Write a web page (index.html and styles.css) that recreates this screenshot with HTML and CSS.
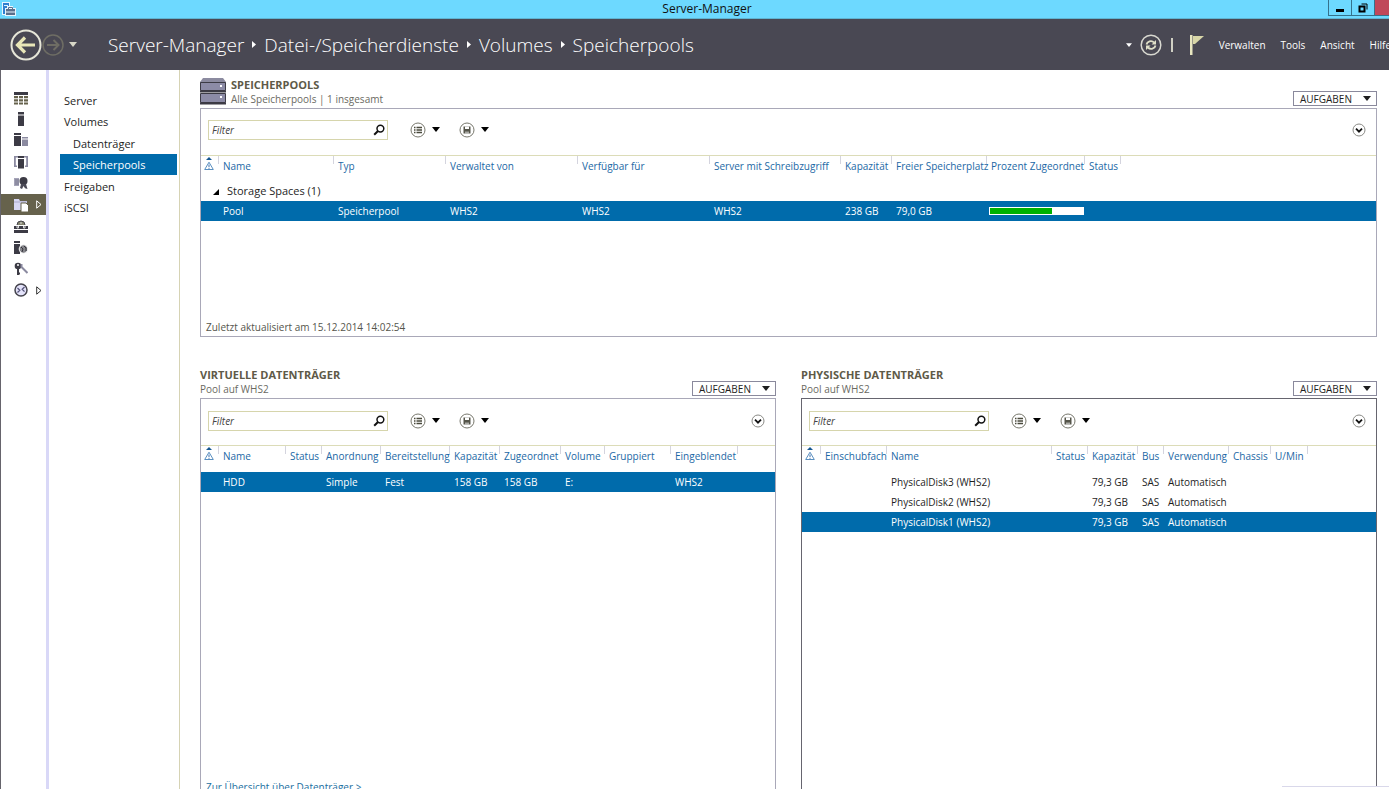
FILE: index.html
```
<!DOCTYPE html>
<html lang="de">

<head>
  <meta charset="utf-8">
  <title>Server-Manager</title>
  <link rel="stylesheet" href="styles.css">
</head>

<body>
  <!-- shared icons -->
  <svg class="defs" aria-hidden="true">
    <symbol id="caret" viewBox="0 0 8 5"><path d="M0 0h8L4 5z" fill="currentColor"/></symbol>
    <symbol id="right" viewBox="0 0 4 7"><path d="M0 0l4 3.5L0 7z" fill="currentColor"/></symbol>
    <symbol id="search" viewBox="0 0 12 12">
      <circle cx="7.4" cy="4.6" r="3.4" fill="none" stroke="#111" stroke-width="1.5"/>
      <path d="M5 7L1.2 10.8" stroke="#111" stroke-width="2"/>
    </symbol>
    <symbol id="list" viewBox="0 0 16 16">
      <circle cx="8" cy="8" r="7" fill="#fff" stroke="#77776c"/>
      <path d="M4 5.5h1.5M4 8h1.5M4 10.5h1.5M6.5 5.5H12M6.5 8H12M6.5 10.5H12" stroke="#4a4a3c" stroke-width="1.3"/>
    </symbol>
    <symbol id="save" viewBox="0 0 16 16">
      <circle cx="8" cy="8" r="7" fill="#fff" stroke="#77776c"/>
      <path d="M4.5 4.5h7v7h-7z" fill="#55554a"/>
      <path d="M6 4.500h4v2.500H6zM6.500 9.500h1v2h-1zM8.500 9.500h1v2h-1z" fill="#fff"/>
    </symbol>
    <symbol id="expand" viewBox="0 0 14 14">
      <circle cx="7" cy="7" r="6" fill="#fff" stroke="#8a8a86"/>
      <path d="M4 5.700l3 3 3-3" fill="none" stroke="#111" stroke-width="1.8"/>
    </symbol>
    <symbol id="warn" viewBox="0 0 10 14">
      <path d="M2 3l3-3 3 3z" fill="#15568f"/>
      <path d="M5 5.200L9.300 12.500H.7z" fill="#fff" stroke="#5a8fc0"/>
      <path d="M5 7.500v2.500M5 10.800v1" stroke="#3a6fb0"/>
    </symbol>
  </svg>

  <div class="window">
    <div class="titlebar">
      <svg class="app-icon" viewBox="0 0 14 14">
        <path d="M0 0h8v13H0z" fill="#e8f6ff"/>
        <path d="M1 1h6v11H1z" fill="#2f7fd0"/>
        <path d="M2 3.500h4" stroke="#d8f2ff"/>
        <path d="M3 6h2V4h6v2h3v8H3z" fill="#e8f6ff"/>
        <path d="M4 7h9v2.500H4zM4 10.500h9V13H4z" fill="#5b6f8c"/>
        <path d="M6.500 7V5.500h4V7" fill="none" stroke="#5b6f8c"/>
      </svg>
      <span class="window-title">Server-Manager</span>
      <div class="window-buttons">
        <button class="win-btn" aria-label="Minimieren"><svg width="10" height="10"><path d="M1 6h8v3H1z"/></svg></button>
        <button class="win-btn" aria-label="Verkleinern"><svg width="10" height="10" fill="none" stroke="#000"><path d="M1.500 3.500h5v5h-5z" stroke-width="2"/><path d="M3.500 1h5.500v5.500"/></svg></button>
        <button class="win-btn close" aria-label="Schließen"></button>
      </div>
    </div>

    <header class="header">
      <button class="icon-btn" aria-label="Zurück">
        <svg width="32" height="32" fill="none"><circle cx="16" cy="16" r="14.500" stroke="#e6e6d8" stroke-width="2"/><path d="M7 16h18M15 8.500L7.500 16l7.500 7.500" stroke="#e8e6b8" stroke-width="3.200"/></svg>
      </button>
      <button class="icon-btn" aria-label="Vorwärts">
        <svg width="22" height="22" fill="none" stroke="#6e6d64"><circle cx="11" cy="11" r="10" stroke-width="1.500"/><path d="M5 11h11M11.500 6l5 5-5 5" stroke-width="2"/></svg>
      </button>
      <button class="icon-btn history" aria-label="Verlauf"><svg width="8" height="5"><use href="#caret"/></svg></button>

      <nav class="breadcrumb">
        <a href="#">Server-Manager</a>
        <svg width="4" height="7"><use href="#right"/></svg>
        <a href="#">Datei-/Speicherdienste</a>
        <svg width="4" height="7"><use href="#right"/></svg>
        <a href="#">Volumes</a>
        <svg width="4" height="7"><use href="#right"/></svg>
        <a href="#">Speicherpools</a>
      </nav>

      <div class="header-tools">
        <button class="icon-btn" aria-label="Optionen"><svg width="6" height="4"><use href="#caret"/></svg></button>
        <button class="icon-btn refresh" aria-label="Aktualisieren">
          <svg width="22" height="22" fill="none"><circle cx="11" cy="11" r="9.800" stroke="#d8d8d0" stroke-width="1.500"/><path d="M6.500 10.500C7 7.500 11.500 6 14 8.500M15.500 11.500C15 14.500 10.500 16 8 13.500" stroke="#e0e0c8" stroke-width="1.800"/><path d="M16 6v4.500h-4.500zM6 16v-4.500h4.500z" fill="#e0e0c8"/></svg>
        </button>
        <span class="divider"></span>
        <button class="icon-btn flag" aria-label="Benachrichtigungen">
          <svg width="14" height="20"><path d="M0 0h2.500v20H0z" fill="#e8e6c0"/><path d="M3 1h11L5 9H3z" fill="#d8d6a8"/></svg>
        </button>
        <button class="menu">Verwalten</button>
        <button class="menu">Tools</button>
        <button class="menu">Ansicht</button>
        <button class="menu">Hilfe</button>
      </div>
    </header>

    <div class="body">
      <nav class="rail">
        <a href="#" aria-label="Dashboard"><svg viewBox="0 0 14 14"><path d="M0 1h14v3H0z" fill="#3c3b45"/><path d="M0 5h4v2.300H0zM5 5h4v2.300H5zM10 5h4v2.300h-4zM0 8.200h4v2.300H0zM5 8.200h4v2.300H5zM10 8.200h4v2.300h-4zM0 11.400h4V13.500H0zM5 11.400h4V13.500H5zM10 11.400h4V13.500h-4z" fill="#66624c"/></svg></a>
        <a href="#" aria-label="Lokaler Server"><svg viewBox="0 0 14 14"><path d="M4 0h6v2.500H4zM4 3.500h6V14H4z" fill="#3c3b45"/></svg></a>
        <a href="#" aria-label="Alle Server"><svg viewBox="0 0 14 14"><path d="M0 0h7v2H0zM0 3h7v10H0z" fill="#3c3b45"/><path d="M8 4h6v1.500H8zM8 6.500h6V13H8z" fill="#8b8aa0"/></svg></a>
        <a href="#" aria-label="Servergruppe"><svg viewBox="0 0 14 14"><path d="M1 1h3v1.500H1.800v8H3V12H0V1zM10 1h4v11h-3v-1.500h1.200v-8H10z" fill="#8b8aa0"/><path d="M4 1h6v2H4zM4 4h6v9.500H4z" fill="#3c3b45"/></svg></a>
        <a href="#" aria-label="Zertifikatdienste"><svg viewBox="0 0 14 14"><path d="M0 2h5v8H0z" fill="#a5a4b8"/><path d="M1 4h4M1 6h4M1 8h4" stroke="#77768c"/><circle cx="9.500" cy="5" r="4" fill="#3c3b45"/><path d="M7 8h5l1.500 5-2.500-.8L9.500 10 8 13l-2-1z" fill="#4a4955"/></svg></a>
        <a href="#" class="active" aria-label="Datei-/Speicherdienste"><svg viewBox="0 0 14 14"><path d="M0 1h5l1 2h7v9H0z" fill="#d6d6f2"/><path d="M0 4h13" stroke="#aaa9c8"/><path d="M7 5h5l2.500 2.500V14H7z" fill="#fff" stroke="#66624c"/></svg><svg class="more" viewBox="0 0 6 9"><path d="M.7.8l4.300 3.700L.7 8.200z" fill="none" stroke="#fff"/></svg></a>
        <a href="#" aria-label="Hyper-V"><svg viewBox="0 0 14 14"><path d="M3 6a4 4 0 0 1 8 0" fill="#85856f" stroke="#44434c"/><path d="M0 7h14v3H0zM0 11h14v3H0z" fill="#3c3b45"/><path d="M3 7v2h1.500V7M9.500 7v2H11V7M6 4h2" stroke="#ddd" fill="none"/></svg></a>
        <a href="#" aria-label="IIS"><svg viewBox="0 0 14 14"><path d="M0 0h6v2H0zM0 3h6v10H0z" fill="#3c3b45"/><circle cx="9.500" cy="8" r="4.300" fill="#85858a" stroke="#fff"/><path d="M7 6l2 2-1 3M10 5l2 2v3" stroke="#35343c" fill="none"/></svg></a>
        <a href="#" aria-label="Zugriff"><svg viewBox="0 0 14 14"><circle cx="4" cy="4" r="3.300" fill="#3c3b45"/><path d="M4 6v7M4 11.500h2" stroke="#3c3b45" stroke-width="2"/><path d="M7.500 2v3l6 6" stroke="#8b8aa0" stroke-width="2" fill="none"/><circle cx="4" cy="3" r="1" fill="#fff"/></svg></a>
        <a href="#" aria-label="Remotedesktop"><svg viewBox="0 0 14 14"><circle cx="7" cy="7" r="6" fill="#e4e3fa" stroke="#44434c" stroke-width="1.500"/><path d="M3.500 5l2.300 2.300L3.500 9.500M10.500 4L8.200 6.300l2.300 2.300" stroke="#55547a" stroke-width="1.300" fill="none"/></svg><svg class="more" viewBox="0 0 6 9"><path d="M.7.8l4.300 3.700L.7 8.200z" fill="none" stroke="#333"/></svg></a>
      </nav>

      <nav class="sidenav">
        <ul>
          <li><a href="#">Server</a></li>
          <li><a href="#">Volumes</a></li>
          <li class="sub"><a href="#">Datenträger</a></li>
          <li class="sub selected"><a href="#">Speicherpools</a></li>
          <li><a href="#">Freigaben</a></li>
          <li><a href="#">iSCSI</a></li>
        </ul>
      </nav>

      <main class="content">
        <section class="tile pools">
          <div class="tile-head">
            <svg class="pool-icon" width="26" height="28" viewBox="0 0 26 28">
              <path d="M3 1h20l3 4v8H0V5z" fill="#8c8ba0"/>
              <path d="M.5 5.500h25v8H.5zM.5 16.500h25v9H.5z" fill="#8c8ba6" stroke="#3c3b45"/>
              <path d="M0 14.500h26M0 26.500h26" stroke="#3c3b45" stroke-width="2"/>
              <path d="M20 8h2v2h-2zM20 19h2v2h-2z" fill="#fff"/>
            </svg>
            <div class="tile-title">
              <h2>SPEICHERPOOLS</h2>
              <p>Alle Speicherpools | 1 insgesamt</p>
            </div>
            <button class="tasks">AUFGABEN <svg width="8" height="5"><use href="#caret"/></svg></button>
          </div>
          <div class="panel">
            <div class="toolbar">
              <div class="filter">
                <input type="text" placeholder="Filter" aria-label="Speicherpools filtern">
                <svg width="12" height="12"><use href="#search"/></svg>
              </div>
              <button class="tool" aria-label="Ansicht"><svg width="16" height="16"><use href="#list"/></svg><svg width="8" height="5"><use href="#caret"/></svg></button>
              <button class="tool" aria-label="Speichern"><svg width="16" height="16"><use href="#save"/></svg><svg width="8" height="5"><use href="#caret"/></svg></button>
              <button class="tool expand" aria-label="Erweitern"><svg width="14" height="14"><use href="#expand"/></svg></button>
            </div>
            <table class="pool-table">
              <thead>
                <tr>
                  <th><svg width="10" height="14"><use href="#warn"/></svg></th>
                  <th>Name</th>
                  <th>Typ</th>
                  <th>Verwaltet von</th>
                  <th>Verfügbar für</th>
                  <th>Server mit Schreibzugriff</th>
                  <th>Kapazität</th>
                  <th>Freier Speicherplatz</th>
                  <th>Prozent Zugeordnet</th>
                  <th>Status</th>
                  <th></th>
                </tr>
              </thead>
              <tbody>
                <tr class="group">
                  <td colspan="11"><svg width="6" height="6"><path d="M6 0v6H0z"/></svg>Storage Spaces (1)</td>
                </tr>
                <tr class="selected">
                  <td></td>
                  <td>Pool</td>
                  <td>Speicherpool</td>
                  <td>WHS2</td>
                  <td>WHS2</td>
                  <td>WHS2</td>
                  <td>238 GB</td>
                  <td>79,0 GB</td>
                  <td class="bar"><progress value="67" max="100" aria-label="Prozent Zugeordnet"></progress></td>
                  <td></td>
                  <td></td>
                </tr>
              </tbody>
            </table>
            <p class="panel-foot">Zuletzt aktualisiert am 15.12.2014 14:02:54</p>
          </div>
        </section>

        <div class="disks">
          <section class="tile">
            <div class="tile-head">
              <div class="tile-title">
                <h2>VIRTUELLE DATENTRÄGER</h2>
                <p>Pool auf WHS2</p>
              </div>
              <button class="tasks">AUFGABEN <svg width="8" height="5"><use href="#caret"/></svg></button>
            </div>
            <div class="panel">
              <div class="toolbar">
                <div class="filter">
                  <input type="text" placeholder="Filter" aria-label="Virtuelle Datenträger filtern">
                  <svg width="12" height="12"><use href="#search"/></svg>
                </div>
                <button class="tool" aria-label="Ansicht"><svg width="16" height="16"><use href="#list"/></svg><svg width="8" height="5"><use href="#caret"/></svg></button>
                <button class="tool" aria-label="Speichern"><svg width="16" height="16"><use href="#save"/></svg><svg width="8" height="5"><use href="#caret"/></svg></button>
                <button class="tool expand" aria-label="Erweitern"><svg width="14" height="14"><use href="#expand"/></svg></button>
              </div>
              <table class="virtual-table">
                <thead>
                  <tr>
                    <th><svg width="10" height="14"><use href="#warn"/></svg></th>
                    <th>Name</th>
                    <th>Status</th>
                    <th>Anordnung</th>
                    <th>Bereitstellung</th>
                    <th>Kapazität</th>
                    <th>Zugeordnet</th>
                    <th>Volume</th>
                    <th>Gruppiert</th>
                    <th>Eingeblendet</th>
                    <th></th>
                  </tr>
                </thead>
                <tbody>
                  <tr class="selected">
                    <td></td>
                    <td>HDD</td>
                    <td></td>
                    <td>Simple</td>
                    <td>Fest</td>
                    <td>158 GB</td>
                    <td>158 GB</td>
                    <td>E:</td>
                    <td></td>
                    <td>WHS2</td>
                    <td></td>
                  </tr>
                </tbody>
              </table>
              <a class="panel-foot" href="#">Zur Übersicht über Datenträger &gt;</a>
            </div>
          </section>

          <section class="tile physical">
            <div class="tile-head">
              <div class="tile-title">
                <h2>PHYSISCHE DATENTRÄGER</h2>
                <p>Pool auf WHS2</p>
              </div>
              <button class="tasks">AUFGABEN <svg width="8" height="5"><use href="#caret"/></svg></button>
            </div>
            <div class="panel">
              <div class="toolbar">
                <div class="filter">
                  <input type="text" placeholder="Filter" aria-label="Physische Datenträger filtern">
                  <svg width="12" height="12"><use href="#search"/></svg>
                </div>
                <button class="tool" aria-label="Ansicht"><svg width="16" height="16"><use href="#list"/></svg><svg width="8" height="5"><use href="#caret"/></svg></button>
                <button class="tool" aria-label="Speichern"><svg width="16" height="16"><use href="#save"/></svg><svg width="8" height="5"><use href="#caret"/></svg></button>
                <button class="tool expand" aria-label="Erweitern"><svg width="14" height="14"><use href="#expand"/></svg></button>
              </div>
              <table class="physical-table">
                <thead>
                  <tr>
                    <th><svg width="10" height="14"><use href="#warn"/></svg></th>
                    <th>Einschubfach</th>
                    <th>Name</th>
                    <th>Status</th>
                    <th>Kapazität</th>
                    <th>Bus</th>
                    <th>Verwendung</th>
                    <th>Chassis</th>
                    <th>U/Min</th>
                    <th></th>
                  </tr>
                </thead>
                <tbody>
                  <tr>
                    <td></td>
                    <td></td>
                    <td>PhysicalDisk3 (WHS2)</td>
                    <td></td>
                    <td>79,3 GB</td>
                    <td>SAS</td>
                    <td>Automatisch</td>
                    <td></td>
                    <td></td>
                    <td></td>
                  </tr>
                  <tr>
                    <td></td>
                    <td></td>
                    <td>PhysicalDisk2 (WHS2)</td>
                    <td></td>
                    <td>79,3 GB</td>
                    <td>SAS</td>
                    <td>Automatisch</td>
                    <td></td>
                    <td></td>
                    <td></td>
                  </tr>
                  <tr class="selected">
                    <td></td>
                    <td></td>
                    <td>PhysicalDisk1 (WHS2)</td>
                    <td></td>
                    <td>79,3 GB</td>
                    <td>SAS</td>
                    <td>Automatisch</td>
                    <td></td>
                    <td></td>
                    <td></td>
                  </tr>
                </tbody>
              </table>
            </div>
          </section>
        </div>
      </main>
    </div>
    <div class="corner-popup"></div>
  </div>
</body>

</html>
```
FILE: styles.css
```
* {
  box-sizing: border-box;
}

body {
  margin: 0;
  font-family: "Open Sans", "Noto Sans", sans-serif;
  font-size: 10px;
  line-height: 14px;
  color: #1e1e1e;
  background: #fff;
}

h2, p, ul {
  margin: 0;
  padding: 0;
}

a {
  color: inherit;
  text-decoration: none;
}

button {
  font: inherit;
  color: inherit;
  background: none;
  border: 0;
  padding: 0;
  cursor: pointer;
}

svg {
  display: block;
  flex: none;
}

.defs {
  position: absolute;
  width: 0;
  height: 0;
}

.window {
  position: relative;
  display: flex;
  flex-direction: column;
  height: 100vh;
  overflow: hidden;
}

/* title bar */
.titlebar {
  display: flex;
  flex: none;
  height: 19px;
  background: #6dd9ff;
  border-bottom: 1px solid #5fb4d2;
}

.app-icon {
  width: 14px;
  height: 14px;
  margin: 2px 0 0 2px;
}

.window-title {
  flex: 1;
  padding-left: 70px;
  text-align: center;
  font-size: 12px;
  line-height: 18px;
  color: #111;
}

.window-buttons {
  display: flex;
  height: 16px;
}

.win-btn {
  display: flex;
  align-items: center;
  justify-content: center;
  width: 23px;
  border: 1px solid #35728c;
  border-width: 0 0 1px 1px;
}

.win-btn.close {
  width: 15px;
  background: #c0485a;
}

/* header */
.header {
  display: flex;
  flex: none;
  align-items: center;
  height: 51px;
  padding-left: 10px;
  background: #494853;
  color: #fff;
  overflow: hidden;
}

.icon-btn {
  display: flex;
}

.history {
  margin-left: 5px;
  color: #d8d8c8;
}

.breadcrumb {
  display: flex;
  align-items: center;
  gap: 8px;
  margin-left: 31px;
  font-size: 19px;
  line-height: 26px;
  font-weight: 300;
  white-space: nowrap;
}

.header-tools {
  display: flex;
  align-items: center;
  margin-left: auto;
  margin-right: -2px;
}

.refresh {
  margin-left: 8px;
}

.divider {
  width: 2px;
  height: 14px;
  margin-left: 9px;
  background: #d0d0c4;
}

.flag {
  margin-left: 17px;
}

.menu {
  margin-left: 15px;
}

/* body */
.body {
  display: flex;
  flex: 1;
  min-height: 0;
  border-left: 1px solid #66646c;
}

.rail {
  display: flex;
  flex: none;
  flex-direction: column;
  justify-content: space-between;
  width: 45px;
  height: 214px;
  margin-top: 17px;
}

.rail a {
  display: flex;
  align-items: center;
  height: 21px;
  padding-left: 13px;
}

.rail a.active {
  background: #66624c;
}

.rail svg {
  width: 14px;
  height: 14px;
}

.rail .more {
  width: 6px;
  height: 9px;
  margin-left: 8px;
}

.sidenav {
  flex: none;
  width: 134px;
  padding: 20px 2px 0 11px;
  border-left: 3px solid #d9d8f7;
  border-right: 1px solid #d6d3b4;
  font-size: 11px;
  line-height: 21px;
}

.sidenav ul {
  display: flex;
  flex-direction: column;
  justify-content: space-between;
  height: 128px;
  list-style: none;
}

.sidenav a {
  display: block;
  padding-left: 4px;
}

.sidenav .sub a {
  padding-left: 13px;
}

.sidenav .selected {
  background: #006bab;
  color: #fff;
}

.content {
  flex: 1;
  min-width: 0;
  padding: 7px 12px 0 20px;
}

/* tiles */
.tile {
  display: flex;
  flex-direction: column;
}

.tile-head {
  display: flex;
  align-items: flex-start;
  height: 31px;
}

.pool-icon {
  margin-right: 5px;
}

.tile-title {
  flex: 1;
  color: #6a6a62;
}

.tile-title h2 {
  font-size: 11px;
  line-height: 15px;
  color: #5e5a48;
}

.tasks {
  display: flex;
  align-items: center;
  justify-content: space-between;
  width: 84px;
  height: 15px;
  margin-top: 14px;
  padding: 0 5px 0 6px;
  border: 1px solid #8a899c;
}

.panel {
  display: flex;
  flex-direction: column;
  border: 1px solid #a9a8b8;
}

.pools .panel {
  min-height: 229px;
}

.disks {
  display: grid;
  grid-template-columns: 1fr 1fr;
  gap: 25px;
  margin-top: 30px;
}

.disks .panel {
  min-height: 399px;
}

.physical .panel {
  border-color: #66656f;
}

.toolbar {
  display: flex;
  align-items: center;
  height: 46px;
  padding: 0 10px 3px 7px;
}

.pools .toolbar {
  padding-bottom: 5px;
}

.filter {
  display: flex;
  align-items: center;
  width: 180px;
  height: 20px;
  margin-right: 22px;
  padding-right: 2px;
  border: 1px solid #d6d5ac;
}

.filter input {
  flex: 1;
  min-width: 0;
  padding: 0 3px;
  border: 0;
  outline: 0;
  background: none;
  font: inherit;
  font-style: italic;
}

.filter input::placeholder {
  color: #444;
}

.tool {
  display: flex;
  align-items: center;
  gap: 6px;
  margin-right: 19px;
  color: #000;
}

.tool.expand {
  margin-left: auto;
  margin-right: 0;
}

/* tables */
table {
  width: 100%;
  table-layout: fixed;
  border-collapse: collapse;
}

thead tr {
  height: 26px;
  border-top: 1px solid #dcdcb8;
}

.pool-table thead tr {
  height: 25px;
}

th {
  padding: 3px 0 0 5px;
  text-align: left;
  vertical-align: top;
  font-weight: 400;
  white-space: nowrap;
  color: #1c68a5;
  background: linear-gradient(#d4d4de, #d4d4de) no-repeat left top / 1px 8px;
}

th:first-child {
  padding: 1px 0 0 3px;
  background: none;
}

td {
  height: 20px;
  padding: 0 0 0 5px;
  white-space: nowrap;
}

tr.selected td {
  background: #006bab;
  color: #fff;
}

.group td {
  font-size: 11px;
  padding-left: 12px;
}

.group svg {
  display: inline-block;
  margin-right: 8px;
}

td.bar {
  padding-left: 3px;
}

progress {
  display: block;
  width: 95px;
  height: 8px;
  appearance: none;
  border: 1px solid #fff;
}

progress::-webkit-progress-bar {
  background: #fff;
}

progress::-webkit-progress-value {
  background: #00b100;
}

/* column widths */
.pool-table th:nth-child(1) { width: 17px; }
.pool-table th:nth-child(2) { width: 115px; }
.pool-table th:nth-child(3) { width: 112px; }
.pool-table th:nth-child(4) { width: 132px; }
.pool-table th:nth-child(5) { width: 132px; }
.pool-table th:nth-child(6) { width: 131px; }
.pool-table th:nth-child(7) { width: 51px; }
.pool-table th:nth-child(8) { width: 95px; }
.pool-table th:nth-child(9) { width: 98px; }
.pool-table th:nth-child(10) { width: 36px; }

.virtual-table th:nth-child(1) { width: 17px; }
.virtual-table th:nth-child(2) { width: 67px; }
.virtual-table th:nth-child(3) { width: 36px; }
.virtual-table th:nth-child(4) { width: 59px; }
.virtual-table th:nth-child(5) { width: 69px; }
.virtual-table th:nth-child(6) { width: 50px; }
.virtual-table th:nth-child(7) { width: 61px; }
.virtual-table th:nth-child(8) { width: 44px; }
.virtual-table th:nth-child(9) { width: 66px; }
.virtual-table th:nth-child(10) { width: 67px; }

.physical-table th:nth-child(1) { width: 18px; }
.physical-table th:nth-child(2) { width: 66px; }
.physical-table th:nth-child(3) { width: 165px; }
.physical-table th:nth-child(4) { width: 36px; }
.physical-table th:nth-child(5) { width: 50px; }
.physical-table th:nth-child(6) { width: 26px; }
.physical-table th:nth-child(7) { width: 65px; }
.physical-table th:nth-child(8) { width: 42px; }
.physical-table th:nth-child(9) { width: 37px; }

.panel-foot {
  margin-top: auto;
  padding: 0 5px 2px;
  color: #55554c;
}

a.panel-foot {
  color: #1c6f9f;
}

.corner-popup {
  position: absolute;
  right: 0;
  bottom: 0;
  width: 107px;
  height: 3px;
  background: #fff;
  border-top: 1px solid #d9d8ea;
}
```
